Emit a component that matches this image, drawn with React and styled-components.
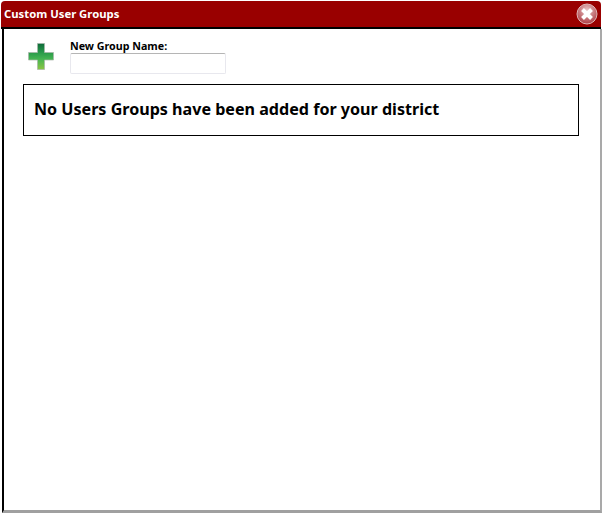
import React from 'react'
import styled, { createGlobalStyle } from 'styled-components'

const GlobalStyle = createGlobalStyle`
  html, body {
    margin: 0;
    padding: 0;
    background: #fff;
  }
`

// Dialog frame
const Dialog = styled.div`
  box-sizing: border-box;
  width: 602px;
  height: 513px;
  padding-top: 1px;
  display: flex;
  flex-direction: column;
  font-family: 'Noto Sans', Tahoma, sans-serif;
  overflow: hidden;
`

// Title bar
const TitleBar = styled.div`
  box-sizing: border-box;
  height: 28px;
  margin: 0 1px;
  flex: none;
  display: flex;
  align-items: center;
  justify-content: space-between;
  padding: 0 3px 1px 3px;
  background: #990000;
  border-bottom: 2px solid #000;
  border-radius: 4px 4px 0 0;
`

const Title = styled.div`
  color: #fff;
  font-size: 11.3px;
  font-weight: 700;
`

const CloseIcon = styled.svg`
  display: block;
  width: 22px;
  height: 22px;
`

// Body
const Body = styled.div`
  box-sizing: border-box;
  flex: 1;
  margin-left: 2px;
  padding: 11px 21px 0 19px;
  background: #fff;
  border-left: 2px solid #000;
  border-right: 2px solid #a9a9a9;
  border-bottom: 3px solid #a0a0a0;
`

const AddRow = styled.div`
  display: flex;
  height: 44px;
`

const AddIcon = styled.svg`
  display: block;
  width: 26px;
  height: 27px;
  margin: 3px 0 0 5px;
`

const Field = styled.div`
  display: flex;
  flex-direction: column;
  margin-left: 16px;
`

const Label = styled.label`
  color: #000;
  font-size: 10.7px;
  line-height: 13px;
  font-weight: 700;
`

const NameInput = styled.input`
  box-sizing: border-box;
  width: 156px;
  height: 21px;
  margin: 0;
  padding: 0;
  background: #fff;
  border: 1px solid #e8e8ee;
  border-top-color: #b5b5b5;
  border-radius: 2px;
`

const Message = styled.div`
  box-sizing: border-box;
  width: 556px;
  height: 52px;
  display: flex;
  align-items: center;
  padding: 0 0 3px 10px;
  border: 1px solid #000;
  color: #000;
  font-size: 16.1px;
  font-weight: 700;
`

const App = () => {
  return (
    <Dialog>
      <GlobalStyle />
      <TitleBar>
        <Title>Custom User Groups</Title>
        <CloseIcon viewBox='0 0 22 22'>
          <defs>
            <radialGradient id='closeFill' cx='50%' cy='30%' r='75%'>
              <stop offset='0%' stopColor='#e8c4c4' />
              <stop offset='100%' stopColor='#a8343c' />
            </radialGradient>
          </defs>
          <circle cx='11' cy='11' r='10' fill='url(#closeFill)' stroke='#e0b8b8' strokeWidth='1' />
          <path d='M6.5 6.5L15.5 15.5M15.5 6.5L6.5 15.5' stroke='#fff' strokeWidth='4' />
        </CloseIcon>
      </TitleBar>
      <Body>
        <AddRow>
          <AddIcon viewBox='0 0 26 27'>
            <defs>
              <linearGradient id='plusFill' x1='0' y1='0' x2='0' y2='1'>
                <stop offset='0%' stopColor='#0d6b3a' />
                <stop offset='35%' stopColor='#2a9a4a' />
                <stop offset='60%' stopColor='#45b552' />
                <stop offset='100%' stopColor='#8cc544' />
              </linearGradient>
            </defs>
            <path d='M9.5 .5H16.5V9.5H25.5V17H16.5V26.5H9.5V17H.5V9.5H9.5Z' fill='url(#plusFill)' stroke='#a9b5a9' strokeWidth='.7' />
          </AddIcon>
          <Field>
            <Label>New Group Name:</Label>
            <NameInput />
          </Field>
        </AddRow>
        <Message>No Users Groups have been added for your district</Message>
      </Body>
    </Dialog>
  )
}

export default App
